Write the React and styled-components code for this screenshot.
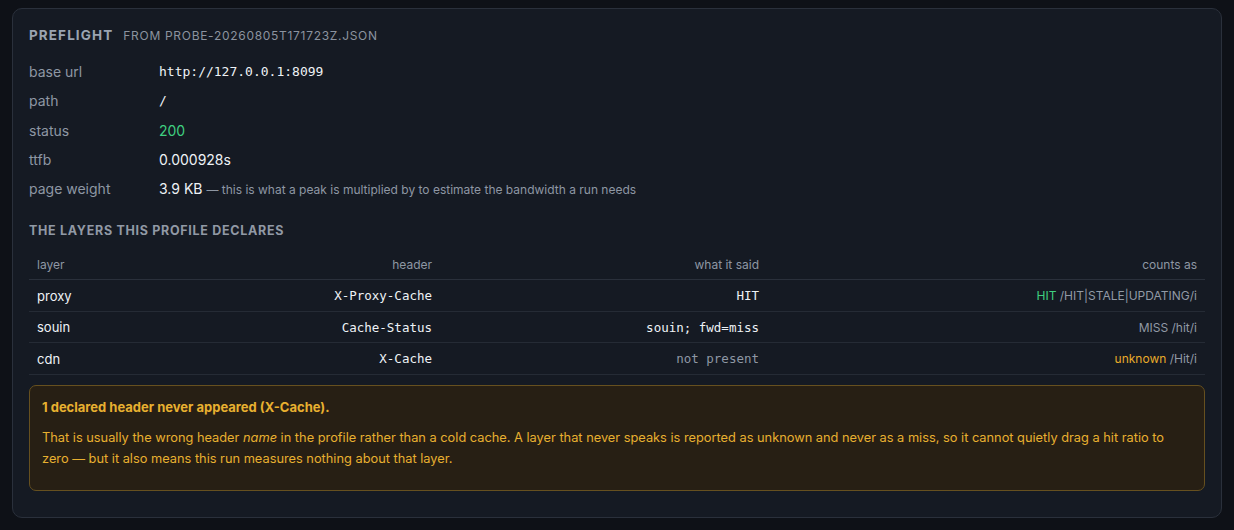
import React from "react";
import styled, { createGlobalStyle } from "styled-components";

const rows = [
  { layer: "proxy", header: "X-Proxy-Cache", said: "HIT", verdict: "HIT", tone: "hit", rule: "/HIT|STALE|UPDATING/i" },
  { layer: "souin", header: "Cache-Status", said: "souin; fwd=miss", verdict: "MISS", tone: "miss", rule: "/hit/i" },
  { layer: "cdn", header: "X-Cache", said: "not present", absent: true, verdict: "unknown", tone: "unknown", rule: "/Hit/i" },
];

export default function App() {
  return (
    <>
      <GlobalStyle />
      <Page>
        <Card>
          <TitleRow>
            <Title>Preflight</Title>
            <Source>from probe-20260805T171723Z.json</Source>
          </TitleRow>

          <Facts>
            <Label>base url</Label>
            <Value mono>http://127.0.0.1:8099</Value>
            <Label>path</Label>
            <Value mono>/</Value>
            <Label>status</Label>
            <Value ok>200</Value>
            <Label>ttfb</Label>
            <Value>0.000928s</Value>
            <Label>page weight</Label>
            <Value>
              3.9 KB <Note>— this is what a peak is multiplied by to estimate the bandwidth a run needs</Note>
            </Value>
          </Facts>

          <SectionTitle>The layers this profile declares</SectionTitle>

          <Table>
            <colgroup>
              <col style={{ width: 150 }} />
              <col style={{ width: 261 }} />
              <col style={{ width: 327 }} />
              <col />
            </colgroup>
            <thead>
              <tr>
                <Th>layer</Th>
                <Th right>header</Th>
                <Th right>what it said</Th>
                <Th right>counts as</Th>
              </tr>
            </thead>
            <tbody>
              {rows.map((r) => (
                <tr key={r.layer}>
                  <Td>{r.layer}</Td>
                  <Td right mono>{r.header}</Td>
                  <Td right mono absent={r.absent}>{r.said}</Td>
                  <Td right small>
                    <Verdict tone={r.tone}>{r.verdict}</Verdict> <Rule>{r.rule}</Rule>
                  </Td>
                </tr>
              ))}
            </tbody>
          </Table>

          <Warning>
            <WarnTitle>1 declared header never appeared (X-Cache).</WarnTitle>
            <WarnBody>
              That is usually the wrong header <em>name</em> in the profile rather than a cold cache. A layer that never
              speaks is reported as unknown and never as a miss, so it cannot quietly drag a hit ratio to zero — but it
              also means this run measures nothing about that layer.
            </WarnBody>
          </Warning>
        </Card>
      </Page>
    </>
  );
}

// #####################################################################

const GlobalStyle = createGlobalStyle`
body{
    margin:0;
    background:#0e1117;
    font-family:Inter, "Noto Sans", sans-serif;
    color:#e6edf3;
}
`

const Page = styled.div`
padding:8px 12px 12px 12px;
`

const Card = styled.div`
background:#151a23;
border:1px solid #2a303b;
border-radius:10px;
padding:18px 16px 26px 16px;
`

// #####################################################################

const TitleRow = styled.div`
display:flex;
align-items:baseline;
gap:10px;
margin-bottom:14px;
`

const Title = styled.span`
font-size:13.5px;
font-weight:700;
letter-spacing:1.1px;
text-transform:uppercase;
color:#9ba4b1;
`

const Source = styled.span`
font-size:12px;
letter-spacing:0.7px;
text-transform:uppercase;
color:#8b939f;
`

// #####################################################################

const Facts = styled.div`
display:grid;
grid-template-columns:130px 1fr;
grid-auto-rows:29.3px;
align-items:center;
margin-bottom:20px;
`

const Label = styled.div`
font-size:14px;
color:#8e97a3;
`

const Value = styled.div`
font-size:${(p) => (p.mono ? "13px" : "14px")};
font-family:${(p) => (p.mono ? '"DejaVu Sans Mono", monospace' : "inherit")};
color:${(p) => (p.ok ? "#3fcf80" : "#eef2f6")};
`

const Note = styled.span`
font-size:12px;
color:#8e97a3;
`

const SectionTitle = styled.div`
font-size:12.5px;
font-weight:700;
letter-spacing:0.7px;
text-transform:uppercase;
color:#9199a5;
margin-bottom:11px;
`

// #####################################################################

const Table = styled.table`
width:100%;
border-collapse:collapse;
table-layout:fixed;
margin-bottom:10px;
`

const Th = styled.th`
font-size:12px;
font-weight:400;
color:#8e97a3;
text-align:${(p) => (p.right ? "right" : "left")};
padding:8px 8px 7px 8px;
border-bottom:1px solid #2a303b;
`

const Td = styled.td`
height:31.5px;
box-sizing:border-box;
padding:0 8px;
font-size:${(p) => (p.mono ? "12.5px" : p.small ? "12px" : "13px")};
font-family:${(p) => (p.mono ? '"DejaVu Sans Mono", monospace' : "inherit")};
color:${(p) => (p.absent ? "#8e97a3" : "#eef2f6")};
text-align:${(p) => (p.right ? "right" : "left")};
border-bottom:1px solid #252b35;
white-space:nowrap;
`

const toneColor = { hit: "#3fcf80", miss: "#9199a5", unknown: "#e8ab2a" };

const Verdict = styled.span`
color:${(p) => toneColor[p.tone]};
`

const Rule = styled.span`
color:#9199a5;
`

// #####################################################################

const Warning = styled.div`
background:#271f14;
border:1px solid #66501f;
border-radius:7px;
padding:13px 12px 21px 12px;
color:#e8b030;
`

const WarnTitle = styled.div`
font-size:13px;
font-weight:700;
margin-bottom:12px;
`

const WarnBody = styled.div`
font-size:12.8px;
line-height:21px;
`
